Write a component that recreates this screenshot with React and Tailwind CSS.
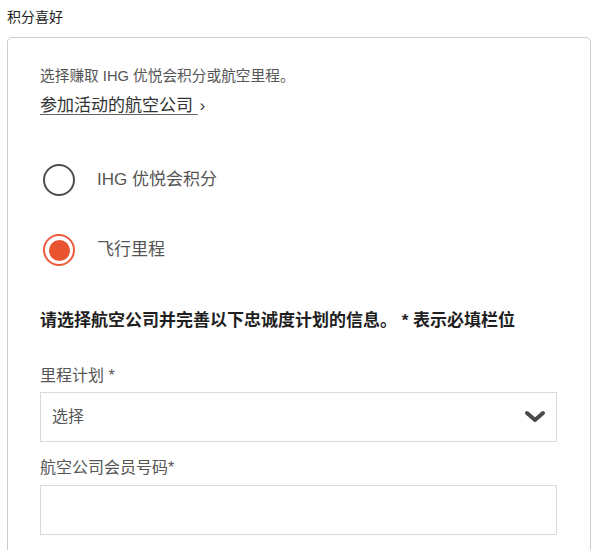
const FONT = { fontFamily: '"Liberation Sans", "Noto Sans CJK SC", sans-serif' };

function Radio({ checked, label }) {
  return (
    <label className="flex items-center gap-[22px] cursor-pointer">
      {checked ? (
        <span className="flex h-[32px] w-[32px] items-center justify-center rounded-full border-2 border-[#ec5a3a] bg-white">
          <span className="h-[21px] w-[21px] rounded-full bg-[#e9532f]" />
        </span>
      ) : (
        <span className="h-[32px] w-[32px] rounded-full border-2 border-[#4d4d4d] bg-white" />
      )}
      <span className="text-[17px] leading-[24px] text-[#555]">{label}</span>
    </label>
  );
}

export default function App() {
  return (
    <div className="min-h-[550px] bg-white pt-[7px]" style={FONT}>
      <div className="pl-[7px] text-[14px] leading-[20px] text-[#222]">积分喜好</div>

      <div className="ml-[7px] mt-[10px] w-[584px] rounded-[5px] border border-[#ccc] pb-[40px] pl-[32px] pr-[32px] pt-[28px]">
        <p className="text-[14.7px] leading-[20px] text-[#555]">选择赚取 IHG 优悦会积分或航空里程。</p>
        <a href="#" className="mt-[10px] inline-flex items-center text-[17px] leading-[20px] text-[#333]">
          <span className="underline decoration-[#666] underline-offset-[3px] whitespace-pre">参加活动的航空公司 </span>
          <span className="ml-[2px] text-[16px]">›</span>
        </a>

        <div className="mt-[46px] flex flex-col gap-[38px] pl-[3px]">
          <Radio label="IHG 优悦会积分" />
          <Radio checked label="飞行里程" />
        </div>

        <p className="mt-[43px] text-[17px] font-bold leading-[24px] text-[#1f1f1f]">
          请选择航空公司并完善以下忠诚度计划的信息。 * 表示必填栏位
        </p>

        <div className="mt-[31px] text-[16px] leading-[24px] text-[#555]">里程计划 *</div>
        <div className="mt-[4px] flex h-[50px] w-[517px] items-center justify-between border border-[#d9d9d9] pl-[11px] pr-[10px]">
          <span className="text-[16px] text-[#555]">选择</span>
          <svg width="22" height="14" viewBox="0 0 22 14" fill="none">
            <path d="M3 3l8 7 8-7" stroke="#4a4a4a" strokeWidth="4" strokeLinecap="round" strokeLinejoin="round" />
          </svg>
        </div>

        <div className="mt-[14px] text-[16px] leading-[24px] text-[#555]">航空公司会员号码*</div>
        <input className="mt-[5px] block h-[50px] w-[517px] border border-[#d9d9d9] px-[11px] text-[16px] outline-none" />
      </div>
    </div>
  );
}
